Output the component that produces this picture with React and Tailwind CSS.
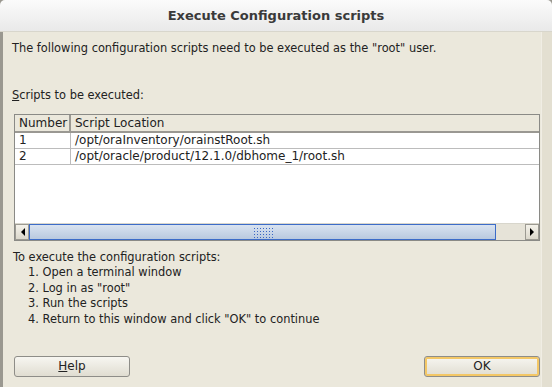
const rows = [
  { num: "1", path: "/opt/oraInventory/orainstRoot.sh" },
  { num: "2", path: "/opt/oracle/product/12.1.0/dbhome_1/root.sh" },
];

const steps = [
  "Open a terminal window",
  'Log in as "root"',
  "Run the scripts",
  'Return to this window and click "OK" to continue',
];

function Arrow({ dir }) {
  return (
    <div className="w-[14px] h-full bg-gradient-to-b from-[#f4f2ea] to-[#dcd8cc] border border-[#9c9a92] flex items-center justify-center">
      <svg width="5" height="8" viewBox="0 0 5 8">
        {dir === "left" ? <polygon points="5,0 5,8 1,4" fill="#000" /> : <polygon points="0,0 0,8 4,4" fill="#000" />}
      </svg>
    </div>
  );
}

export default function App() {
  return (
    <div
      className="w-[552px] h-[387px] flex flex-col bg-[#9a9890] overflow-hidden text-[11.4px] text-[#222]"
      style={{ fontFamily: '"DejaVu Sans", sans-serif' }}
    >
      {/* title bar */}
      <div className="h-[32px] rounded-t-[5px] bg-gradient-to-b from-[#fbfbfb] to-[#e9e9e9] border-b border-[#d8d6cc] flex items-center justify-center">
        <span className="font-bold text-[13px] text-[#3a3a3a]">Execute Configuration scripts</span>
      </div>

      <div className="flex-1 flex ml-[3px]">
        <div className="flex-1 bg-[#ebe8dc] flex flex-col pl-[9px] pr-[1px]">
          <div className="mt-[8px] leading-[16px]">
            The following configuration scripts need to be executed as the "root" user.
          </div>
          <div className="mt-[31px] leading-[16px]">
            <span className="underline">S</span>cripts to be executed:
          </div>

          {/* table */}
          <div className="mt-[11px] ml-[2px] h-[127px] border border-[#8a8a86] bg-white flex flex-col text-[12px]">
            <div className="h-[18px] bg-[#ebe8dc] border-b-2 border-[#9a9892] flex leading-[16px]">
              <div className="w-[56px] pl-[4px] border-r-2 border-[#9a9892]">Number</div>
              <div className="pl-[4px]">Script Location</div>
            </div>
            {rows.map((r) => (
              <div key={r.num} className="h-[16px] flex border-b border-[#bcbcbc] leading-[15px]">
                <div className="w-[56px] pl-[4px] border-r border-[#bcbcbc]">{r.num}</div>
                <div className="pl-[4px]">{r.path}</div>
              </div>
            ))}
            <div className="flex-1" />
            {/* horizontal scrollbar */}
            <div className="h-[17px] flex bg-[#e6e3d8] border-t border-[#d8d6cc]">
              <Arrow dir="left" />
              <div className="w-[467px] h-full border border-[#3c6cc8] bg-gradient-to-b from-[#d9e3f0] to-[#b9c9df] flex items-center justify-center">
                <div
                  className="w-[20px] h-[11px]"
                  style={{
                    backgroundImage: "radial-gradient(#3a66c4 0.8px, transparent 0.9px)",
                    backgroundSize: "3px 3px",
                  }}
                />
              </div>
              <div className="flex-1" />
              <Arrow dir="right" />
            </div>
          </div>

          <div className="mt-[8px] leading-[16px] pl-[1px]">To execute the configuration scripts:</div>
          <ol className="pl-[16px] leading-[15.5px]">
            {steps.map((s, i) => (
              <li key={i}>
                {i + 1}. {s}
              </li>
            ))}
          </ol>

          <div className="flex-1" />
          <div className="flex justify-between ml-[2px] mb-[10px] text-[12px]">
            <button className="w-[116px] h-[21px] rounded-[3px] border border-[#8e8d88] bg-gradient-to-b from-[#f7f6f1] to-[#e0ddd1] leading-[19px]">
              <span className="underline">H</span>elp
            </button>
            <button className="w-[116px] h-[21px] rounded-[3px] border border-[#8e8d88] bg-gradient-to-b from-[#f7f6f1] to-[#e0ddd1] leading-[17px] shadow-[inset_0_0_0_2px_#f3c766]">
              OK
            </button>
          </div>
        </div>
        <div className="w-[11px] bg-[#e3dfd1] border-l border-[#f0ede4]" />
      </div>
    </div>
  );
}
